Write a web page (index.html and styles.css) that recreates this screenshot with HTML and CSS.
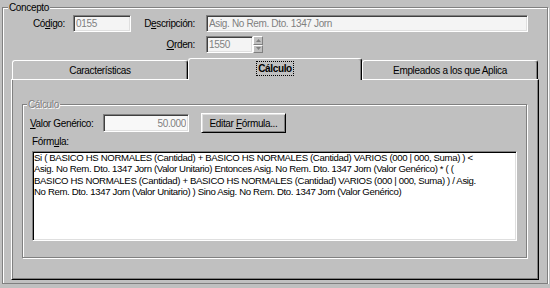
FILE: index.html
```html
<!DOCTYPE html>
<html lang="es">
<head>
    <meta charset="UTF-8">
    <title>Concepto</title>
    <link rel="stylesheet" href="styles.css">
</head>
<body>
    <fieldset class="group concepto">
        <legend>Concepto</legend>
        <div class="row row-top">
            <label class="lbl lbl-codigo" for="codigo">Có<u>d</u>igo:</label>
            <input class="field field-codigo" id="codigo" value="0155" readonly>
            <label class="lbl lbl-desc" for="desc">D<u>e</u>scripción:</label>
            <input class="field field-desc" id="desc" value="Asig. No Rem. Dto. 1347 Jorn" readonly>
        </div>
        <div class="row row-orden">
            <label class="lbl lbl-orden" for="orden"><u>O</u>rden:</label>
            <input class="field field-orden" id="orden" value="1550" readonly>
            <div class="spin">
                <span class="spin-btn">
                    <svg width="5" height="3" viewBox="0 0 5 3"><path d="M2.5 0 L5 3 L0 3 Z" fill="#808080"/></svg>
                </span>
                <span class="spin-btn">
                    <svg width="5" height="3" viewBox="0 0 5 3"><path d="M0 0 L5 0 L2.5 3 Z" fill="#808080"/></svg>
                </span>
            </div>
        </div>

        <div class="tabctl">
            <div class="tabs">
                <div class="tab">Características</div>
                <div class="tab tab-active"><span class="focus">Cálculo</span></div>
                <div class="tab">Empleados a los que Aplica</div>
            </div>
            <div class="tabpanel">
                <fieldset class="group calculo">
                    <legend>Cálculo</legend>
                    <div class="row row-valor">
                        <label class="lbl-valor" for="valor"><u>V</u>alor Genérico:</label>
                        <input class="field field-valor" id="valor" value="50.000" readonly>
                        <button class="btn">Editar <u>F</u>órmula...</button>
                    </div>
                    <div class="lbl-formula">Fórm<u>u</u>la:</div>
                    <div class="formula">
                        Si ( BASICO HS NORMALES (Cantidad) + BASICO HS NORMALES (Cantidad) VARIOS (000 | 000, Suma) ) &lt;<br>
                        Asig. No Rem. Dto. 1347 Jorn (Valor Unitario) Entonces Asig. No Rem. Dto. 1347 Jorn (Valor Genérico) * ( (<br>
                        BASICO HS NORMALES (Cantidad) + BASICO HS NORMALES (Cantidad) VARIOS (000 | 000, Suma) ) / Asig.<br>
                        No Rem. Dto. 1347 Jorn (Valor Unitario) ) Sino Asig. No Rem. Dto. 1347 Jorn (Valor Genérico)
                    </div>
                </fieldset>
            </div>
        </div>
    </fieldset>
</body>
</html>
```

FILE: styles.css
```css
body {
    margin: 0;
    background-color: #c0c0c0;
    color: #000;
    font-family: "Liberation Sans", Arial, sans-serif;
    font-size: 10px;
    letter-spacing: -0.35px;
}
u {
    text-decoration-thickness: 1px;
    text-underline-offset: 1px;
}
.group {
    margin: 0;
    border: 1px solid #808080;
    box-shadow: 1px 1px 0 #fff, inset 1px 1px 0 #fff;
}
.group legend {
    padding: 0 1px;
    line-height: 13px;
    background-color: #c0c0c0;
}
.concepto {
    margin: 1px 2px 0 2px;
    padding: 0 7px 3px 5px;
}
.row {
    display: flex;
    align-items: center;
    white-space: nowrap;
}
.row-top {
    margin-top: 1px;
    height: 17px;
}
.row-orden {
    margin-top: 4px;
    height: 17px;
}
.lbl {
    text-align: right;
}
.lbl-codigo {
    width: 57px;
    margin-right: 8px;
}
.lbl-desc {
    width: 64px;
    margin-right: 11px;
}
.lbl-orden {
    width: 187px;
    margin-right: 11px;
}
.field {
    box-sizing: border-box;
    height: 17px;
    margin: 0;
    padding: 0 2px;
    font: inherit;
    letter-spacing: inherit;
    color: #808080;
    background-color: #f4f4f4;
    border: 1px solid;
    border-color: #808080 #fff #fff #808080;
    box-shadow: inset 1px 1px 0 #404040, inset -1px -1px 0 #dfdfdf;
    outline: none;
}
.field-codigo {
    width: 58px;
}
.field-desc {
    width: 322px;
}
.field-orden {
    width: 47px;
}
.spin {
    display: flex;
    flex-direction: column;
    width: 10px;
    height: 17px;
}
.spin-btn {
    flex: 1;
    box-sizing: border-box;
    display: flex;
    align-items: center;
    justify-content: center;
    border: 1px solid;
    border-color: #fff #808080 #808080 #fff;
}

/* tab control */
.tabctl {
    margin: 4px 0 0 3px;
    width: 528px;
}
.tabs {
    display: flex;
    align-items: flex-end;
    height: 22px;
    padding-left: 1px;
    position: relative;
    z-index: 1;
}
.tab {
    box-sizing: border-box;
    width: 176px;
    height: 19px;
    display: flex;
    align-items: center;
    justify-content: center;
    border-top: 1px solid #fff;
    border-left: 1px solid #fff;
    border-right: 1px solid #000;
    border-radius: 3px 3px 0 0;
    box-shadow: inset -1px 0 0 #808080;
    background-color: #c0c0c0;
}
.tab-active {
    width: 174px;
    height: 22px;
    margin-bottom: -1px;
    padding-bottom: 2px;
    font-weight: bold;
}
.focus {
    outline: 1px dotted #000;
    padding: 0 1px;
    line-height: 13px;
}
.tabpanel {
    border: 1px solid;
    border-color: #fff #000 #000 #fff;
    box-shadow: inset 1px 0 0 #808080, inset -1px -1px 0 #808080;
    padding: 18px 12px 21px 10px;
}
.calculo {
    padding: 0 9px 16px 4px;
}
.calculo legend {
    color: #808080;
    text-shadow: 1px 1px 0 #fff;
}
.row-valor {
    margin-top: 2px;
    height: 20px;
}
.lbl-valor {
    width: 73px;
    margin-left: 3px;
}
.field-valor {
    width: 86px;
    height: 18px;
    text-align: right;
    background-color: #f8f8f8;
}
.btn {
    box-sizing: border-box;
    width: 85px;
    height: 20px;
    margin-left: 12px;
    padding: 0;
    font: inherit;
    letter-spacing: inherit;
    color: #000;
    background-color: #c0c0c0;
    border: 1px solid;
    border-color: #fff #000 #000 #fff;
    box-shadow: inset 1px 1px 0 #dfdfdf, inset -1px -1px 0 #808080;
}
.lbl-formula {
    margin: 2px 0 0 5px;
    line-height: 13px;
}
.formula {
    box-sizing: border-box;
    width: 485px;
    height: 90px;
    margin: 3px 0 0 5px;
    padding: 0 2px 0 1px;
    font-size: 9.6px;
    line-height: 11.3px;
    white-space: nowrap;
    overflow: hidden;
    background-color: #fff;
    border: 1px solid;
    border-color: #808080 #fff #fff #808080;
    box-shadow: inset 1px 1px 0 #000, inset -1px -1px 0 #dfdfdf;
}
```
